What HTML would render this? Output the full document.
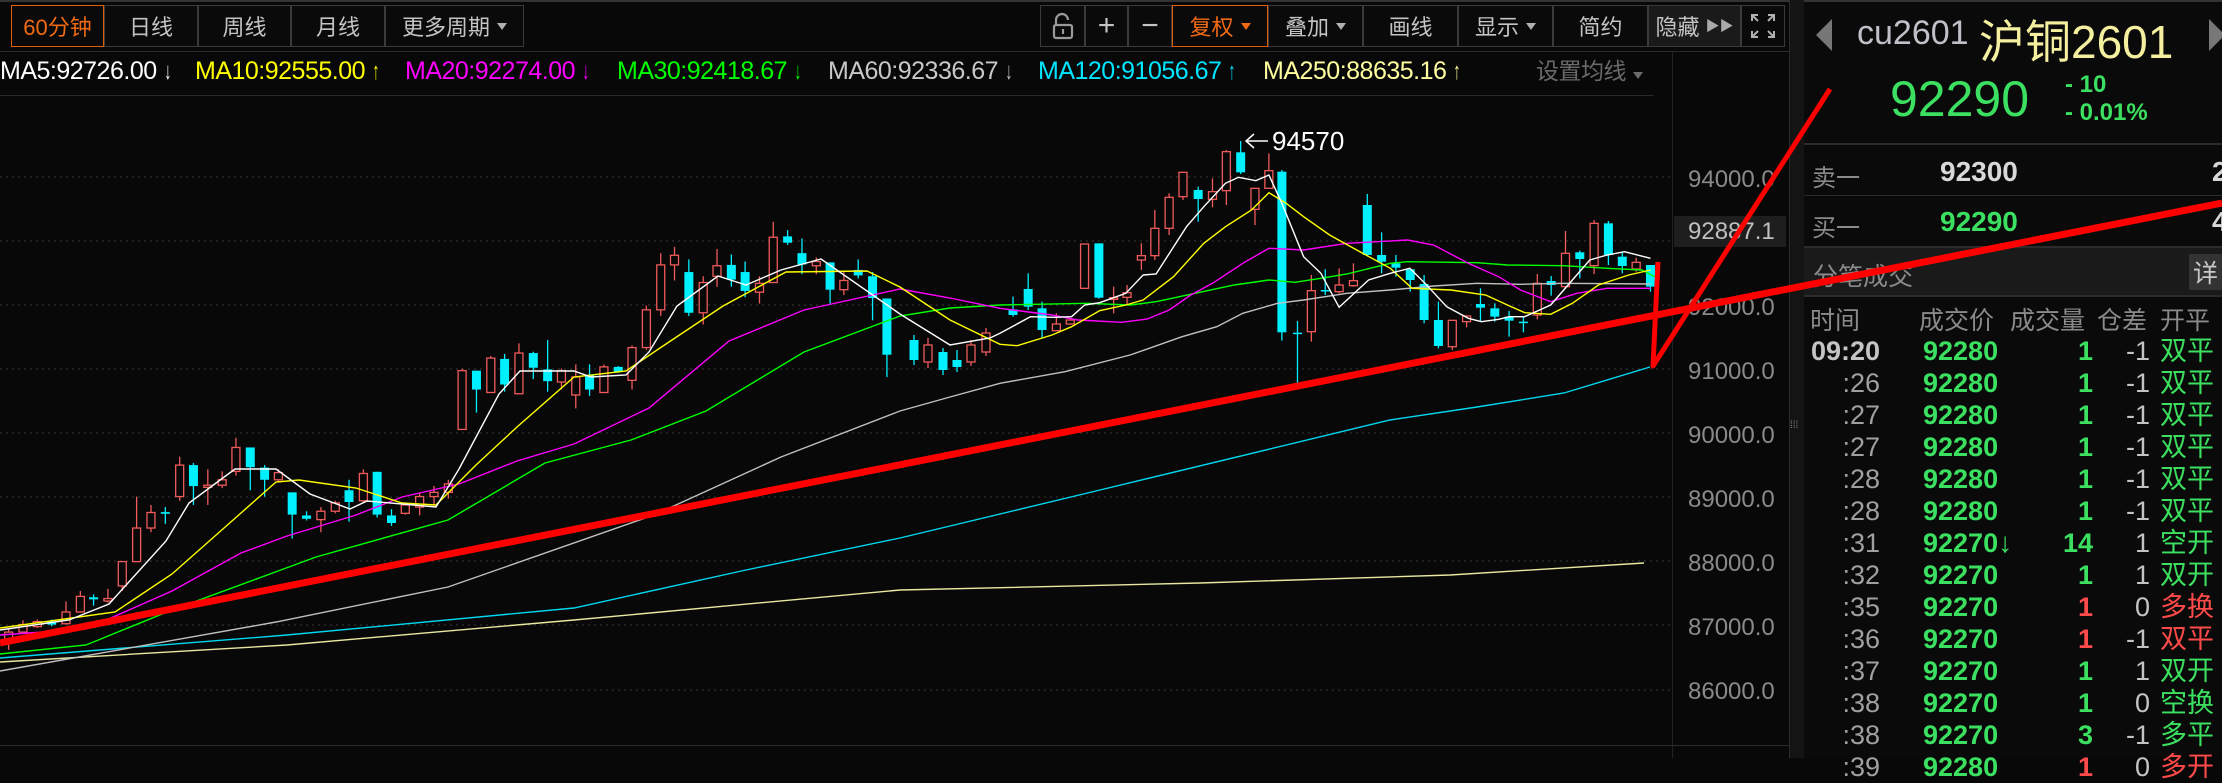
<!DOCTYPE html>
<html><head><meta charset="utf-8">
<style>
*{margin:0;padding:0;box-sizing:border-box}
body{width:2222px;height:758px;background:#080808;overflow:hidden;position:relative;font-family:"Liberation Sans","Noto Sans CJK SC",sans-serif;color:#c8c8c8}
.a{position:absolute;white-space:nowrap}
.btn{position:absolute;top:5px;height:42px;border:1px solid #3a3a3a;background:#0a0a0a;color:#c4c4c4;font-size:22px;display:flex;align-items:center;justify-content:center}
.tri{display:inline-block;width:0;height:0;border-left:5px solid transparent;border-right:5px solid transparent;border-top:7px solid #b0b0b0;margin-left:7px}
.ma{position:absolute;top:56px;font-size:25px;line-height:30px;letter-spacing:-0.5px}
.ar{font-size:24px;margin-left:5px;font-weight:100;transform:scaleX(0.6);display:inline-block}
.tb{position:absolute;font-size:27px;line-height:32px;font-weight:bold}
.g{color:#3ce060}.r{color:#ff4a4a}.w{color:#c4c4c4}
</style></head><body>
<div class="a" style="left:0;top:0;width:2222px;height:2px;background:#333"></div>
<div class="btn" style="left:11px;width:93px;border-color:#e0600a;color:#f06a14">60分钟</div>
<div class="btn" style="left:104px;width:94px">日线</div>
<div class="btn" style="left:198px;width:93px">周线</div>
<div class="btn" style="left:291px;width:94px">月线</div>
<div class="btn" style="left:385px;width:139px">更多周期<span class="tri"></span></div>
<div class="btn" style="left:1040px;width:45px"><svg width="22" height="28" viewBox="0 0 22 28"><path d="M4 13 V8 a6 6 0 0 1 12 0" fill="none" stroke="#9a9a9a" stroke-width="2.2"/><rect x="2" y="13" width="18" height="13" rx="2" fill="none" stroke="#9a9a9a" stroke-width="2.2"/><line x1="11" y1="17" x2="11" y2="22" stroke="#9a9a9a" stroke-width="2.2"/></svg></div>
<div class="btn" style="left:1085px;width:43px;font-size:30px">+</div>
<div class="btn" style="left:1128px;width:44px;font-size:30px">−</div>
<div class="btn" style="left:1172px;width:96px;border-color:#e0600a;color:#f06a14">复权<span class="tri" style="border-top-color:#f06a14"></span></div>
<div class="btn" style="left:1268px;width:95px">叠加<span class="tri"></span></div>
<div class="btn" style="left:1363px;width:95px">画线</div>
<div class="btn" style="left:1458px;width:95px">显示<span class="tri"></span></div>
<div class="btn" style="left:1553px;width:95px">简约</div>
<div class="btn" style="left:1648px;width:93px;background:#1a1a1a">隐藏<span style="font-size:14px;margin-left:6px;color:#aaa">▶▶</span></div>
<div class="btn" style="left:1741px;width:44px"><svg width="26" height="26" viewBox="0 0 26 26" fill="none" stroke="#b0b0b0" stroke-width="2"><path d="M2 8V2h6M2 2l6 6M24 8V2h-6M24 2l-6 6M2 18v6h6M2 24l6-6M24 18v6h-6M24 24l-6-6"/></svg></div>
<div class="a" style="left:0;top:51px;width:1790px;height:1px;background:#2a2a2a"></div>
<div class="ma" style="left:0;color:#ffffff">MA5:92726.00<span class="ar">↓</span></div>
<div class="ma" style="left:195px;color:#ffff00">MA10:92555.00<span class="ar">↑</span></div>
<div class="ma" style="left:405px;color:#ff00ff">MA20:92274.00<span class="ar">↓</span></div>
<div class="ma" style="left:617px;color:#00ff00">MA30:92418.67<span class="ar">↓</span></div>
<div class="ma" style="left:828px;color:#c8c8c8">MA60:92336.67<span class="ar">↓</span></div>
<div class="ma" style="left:1038px;color:#00e5ff">MA120:91056.67<span class="ar">↑</span></div>
<div class="ma" style="left:1263px;color:#ffffa0">MA250:88635.16<span class="ar">↑</span></div>
<div class="ma" style="left:1536px;color:#6a6a6a;font-size:23px">设置均线<span class="tri" style="border-top-color:#6a6a6a"></span></div>
<div class="a" style="left:0;top:95px;width:1653px;height:1px;background:#2a2a2a"></div>
<div class="a" style="left:1672px;top:52px;width:1px;height:706px;background:#222"></div>
<div class="a" style="left:1789px;top:0;width:1px;height:758px;background:#2c2c2c"></div>
<div class="a" style="left:1790px;top:0;width:14px;height:758px;background:#141414"></div>
<div class="a" style="left:1790px;top:424px;color:#888;font-size:10px;line-height:4px">⁞⁞⁞</div>
<div class="a" style="left:0;top:745px;width:1790px;height:1px;background:#2a2a2a"></div>
<div class="a" style="left:1688px;top:166px;font-size:24px;color:#8a8a8a">94000.0</div>
<div class="a" style="left:1688px;top:294px;font-size:24px;color:#8a8a8a">92000.0</div>
<div class="a" style="left:1674px;top:216px;width:112px;height:31px;background:#1e1e1e"></div>
<div class="a" style="left:1688px;top:218px;font-size:24px;color:#c0c0c0">92887.1</div>
<div class="a" style="left:1688px;top:358px;font-size:24px;color:#8a8a8a">91000.0</div>
<div class="a" style="left:1688px;top:422px;font-size:24px;color:#8a8a8a">90000.0</div>
<div class="a" style="left:1688px;top:486px;font-size:24px;color:#8a8a8a">89000.0</div>
<div class="a" style="left:1688px;top:550px;font-size:24px;color:#8a8a8a">88000.0</div>
<div class="a" style="left:1688px;top:614px;font-size:24px;color:#8a8a8a">87000.0</div>
<div class="a" style="left:1688px;top:678px;font-size:24px;color:#8a8a8a">86000.0</div>
<div class="a" style="left:1804px;top:0;width:418px;height:758px;background:#0a0a0a"></div>
<div class="a" style="left:1804px;top:0;width:418px;height:2px;background:#333"></div>
<svg class="a" style="left:1816px;top:19px" width="18" height="32"><path d="M16 0L0 16L16 32Z" fill="#777"/></svg>
<svg class="a" style="left:2209px;top:19px" width="13" height="32"><path d="M0 0L16 16L0 32Z" fill="#777"/></svg>
<div class="a" style="left:1857px;top:14px;font-size:34px;color:#c0c0c8">cu2601</div>
<div class="a" style="left:1979px;top:6px;font-size:46px;color:#f5f0a0">沪铜2601</div>
<div class="a" style="left:1890px;top:70px;font-size:50px;color:#3ce060">92290</div>
<div class="a" style="left:2065px;top:71px;font-size:24px;font-weight:bold;color:#3ce060">- 10</div>
<div class="a" style="left:2065px;top:99px;font-size:24px;font-weight:bold;color:#3ce060">- 0.01%</div>
<div class="a" style="left:1804px;top:143px;width:418px;height:2px;background:#2c2c2c"></div>
<div class="a" style="left:1812px;top:158px;font-size:24px;color:#8a8a8a">卖一</div>
<div class="a" style="left:1940px;top:156px;font-size:28px;font-weight:bold;color:#d8d8d8">92300</div>
<div class="a" style="left:2212px;top:156px;font-size:28px;font-weight:bold;color:#d8d8d8">2</div>
<div class="a" style="left:1804px;top:195px;width:418px;height:1px;background:#2c2c2c"></div>
<div class="a" style="left:1812px;top:208px;font-size:24px;color:#8a8a8a">买一</div>
<div class="a" style="left:1940px;top:206px;font-size:28px;font-weight:bold;color:#3ce060">92290</div>
<div class="a" style="left:2212px;top:206px;font-size:28px;font-weight:bold;color:#d8d8d8">4</div>
<div class="a" style="left:1804px;top:246px;width:418px;height:51px;background:#1a1a1a;border-top:2px solid #2c2c2c;border-bottom:2px solid #2c2c2c"></div>
<div class="a" style="left:1813px;top:257px;font-size:25px;color:#8a8a8a">分笔成交</div>
<div class="a" style="left:2189px;top:254px;width:33px;height:36px;background:#333;font-size:25px;color:#c8c8c8;padding-left:4px">详</div>
<div class="a" style="left:1810px;top:301px;font-size:25px;color:#8a8a8a">时间</div>
<div class="a" style="left:1919px;top:301px;font-size:25px;color:#8a8a8a">成交价</div>
<div class="a" style="left:2010px;top:301px;font-size:25px;color:#8a8a8a">成交量</div>
<div class="a" style="left:2097px;top:301px;font-size:25px;color:#8a8a8a">仓差</div>
<div class="a" style="left:2160px;top:301px;font-size:25px;color:#8a8a8a">开平</div>
<div id="tbl"></div>
<svg id="ch" class="a" style="left:0;top:0" width="2222" height="758"></svg>
<script>
var rows=[["09:20","92280","1","-1","双平",0,0],[":26","92280","1","-1","双平",0,0],[":27","92280","1","-1","双平",0,0],[":27","92280","1","-1","双平",0,0],[":28","92280","1","-1","双平",0,0],[":28","92280","1","-1","双平",0,0],[":31","92270","14","1","空开",0,0,1],[":32","92270","1","1","双开",0,0],[":35","92270","1","0","多换",1,1],[":36","92270","1","-1","双平",1,1],[":37","92270","1","1","双开",0,0],[":38","92270","1","0","空换",0,0],[":38","92270","3","-1","多平",0,0],[":39","92280","1","0","多开",1,1]];
var h="";
rows.forEach(function(r,i){var y=335+32*i;
h+='<div class="tb w" style="right:342px;top:'+y+'px;'+(i?'font-weight:normal;color:#a0a0a0':'')+'">'+r[0]+'</div>';
h+='<div class="tb g" style="left:1923px;top:'+y+'px">'+r[1]+(r[7]?'<span style="font-size:28px;font-weight:normal">↓</span>':'')+'</div>';
h+='<div class="tb '+(r[5]?'r':'g')+'" style="right:129px;top:'+y+'px">'+r[2]+'</div>';
h+='<div class="tb w" style="right:72px;top:'+y+'px;font-weight:normal">'+r[3]+'</div>';
h+='<div class="tb '+(r[6]?'r':'g')+'" style="left:2160px;top:'+y+'px;font-weight:normal">'+r[4]+'</div>';});
document.getElementById('tbl').innerHTML=h;
var s="";
[177,241,305,369,433,497,561,625,690].forEach(function(y){s+='<line x1="0" y1="'+y+'" x2="1672" y2="'+y+'" stroke="#3a3a3a" stroke-dasharray="2,4"/>';});
function z6(a){return a.map(function(p){return [1000+p[0]/2.306,120+p[1]/3]})}
var c5=[[15,1268,1285,1260,1310,1],[40,1250,1268,1240,1272,1],[65,1243,1255,1238,1258,1],[90,1243,1250,1238,1254,0],[115,1220,1248,1195,1250,1],[140,1183,1220,1170,1222,1],[163,1185,1190,1178,1205,0],[188,1188,1194,1165,1198,1],[213,1100,1158,1100,1170,1],[238,1020,1100,945,1100,1],[263,983,1020,965,1030,1],[288,982,986,970,1010,0],[313,870,945,850,955,1],[337,870,920,865,965,0],[362,918,923,880,965,1],[387,905,918,885,925,1],[411,828,885,805,895,1],[436,828,875,828,930,0],[461,876,905,870,945,0],[485,888,905,880,910,1],[509,935,988,935,1045,0],[534,990,998,980,1002,0],[559,980,1000,970,1030,1],[584,960,980,955,985,1],[608,930,958,905,1005,0],[633,890,955,880,960,1],[657,886,988,886,995,0],[682,990,1008,975,1015,0],[706,965,985,960,988,1],[731,945,970,935,990,1],[756,935,945,920,970,1],[781,915,935,905,950,1],[805,645,785,640,785,1],[830,645,690,645,745,0],[855,615,697,610,697,1],[879,617,678,605,695,0],[904,603,700,580,700,1],[929,603,638,600,665,0],[954,642,670,572,695,0],[978,645,672,640,690,1],[1003,660,703,630,735,1],[1027,655,690,630,705,0],[1052,636,697,630,697,1],[1077,636,648,634,650,0],[1101,590,668,585,690,1],[1126,500,590,490,595,1],[1151,393,500,365,515,1],[1175,370,393,350,430,1],[1200,410,507,380,515,0],[1225,435,507,420,535,1],[1249,395,420,355,445,1],[1274,393,428,368,445,0],[1298,410,455,385,470,0],[1323,437,458,420,485,1],[1347,327,435,290,435,1],[1372,325,340,310,345,0],[1397,365,392,330,415,0],[1422,385,395,375,415,1],[1446,387,452,387,485,0],[1470,430,452,410,465,1],[1495,405,418,380,425,0],[1520,420,472,410,525,0],[1545,473,607,473,660,0]];
var C=[];
c5.forEach(function(c){C.push([c[0]/1.742,100+c[1]/2.383,100+c[2]/2.383,100+c[3]/2.383,100+c[4]/2.383,c[5]])});
[[914,340,360,335,365,0],[928,345,362,338,368,1],[943,352,370,348,375,0],[957,360,367,350,372,0],[971,345,362,340,366,1],[986,333,352,328,356,1]].forEach(function(c){C.push(c)});
var c6=[[30,568,585,530,590,0],[65,507,560,460,570,0],[97,565,630,545,655,0],[130,612,632,580,632,1],[162,600,612,598,614,1],[195,372,505,372,505,1],[228,370,533,370,536,0],[262,533,538,500,580,1],[293,518,532,495,555,1],[326,407,420,370,450,1],[357,325,407,270,420,1],[390,232,325,220,345,1],[422,157,230,155,240,1],[457,210,237,200,305,0],[490,215,238,175,262,1],[522,95,212,90,255,1],[555,97,157,63,162,0],[588,205,268,205,315,1],[620,152,205,100,205,1],[650,155,637,150,662,0],[686,638,641,603,790,0],[718,512,635,465,665,1],[750,510,513,448,525,0],[782,495,515,445,520,1],[815,482,497,430,500,1],[847,255,405,222,408,0],[880,405,425,337,460,0],[913,430,443,405,470,0],[946,448,480,448,515,0],[978,492,600,465,610,0],[1011,600,678,545,685,0],[1043,601,680,601,690,1],[1076,588,605,588,622,1],[1108,552,563,505,605,0],[1141,565,590,550,605,0],[1174,590,602,573,650,0],[1207,605,607,590,637,0],[1239,490,585,462,598,1],[1271,483,495,468,527,0],[1304,400,500,333,505,1],[1337,397,417,392,475,0],[1370,310,437,300,462,1],[1403,310,405,303,435,0],[1435,410,438,395,460,0],[1467,427,447,413,455,1],[1500,435,500,435,515,0]];
c6.forEach(function(c){C.push([1000+c[0]/2.306,120+c[1]/3,120+c[2]/3,120+c[3]/3,120+c[4]/3,c[5]])});
C.forEach(function(c){var x=c[0],col=c[5]?'#f05a5a':'#00f0ff',b=Math.max(c[2]-c[1],1.5);
s+='<line x1="'+x+'" y1="'+c[3]+'" x2="'+x+'" y2="'+c[4]+'" stroke="'+col+'" stroke-width="1.3"/>';
if(c[5])s+='<rect x="'+(x-4)+'" y="'+c[1]+'" width="8" height="'+b+'" fill="#080808" stroke="'+col+'" stroke-width="1.3"/>';
else s+='<rect x="'+(x-4.5)+'" y="'+c[1]+'" width="9" height="'+b+'" fill="'+col+'"/>';});
function pl(p,col,w){return '<polyline fill="none" stroke="'+col+'" stroke-width="'+(w||1.4)+'" points="'+p.map(function(q){return q[0].toFixed(1)+','+q[1].toFixed(1)}).join(' ')+'"/>'}
var white=[[0,630],[69,620],[109,604],[166,541],[189,503],[235,469],[276,469],[310,494],[350,509],[367,501],[436,507],[459,469],[499,394],[520,371],[574,371],[591,377],[626,375],[649,352],[677,306],[718,276],[746,285],[781,270],[821,259],[900,314],[950,345],[990,338]].concat(z6([[0,640],[70,590],[125,592],[165,590],[195,555],[230,548],[290,520],[330,465],[360,462],[430,320],[470,260],[520,190],[550,172],[590,182],[620,165],[650,250],[700,410],[740,460],[782,562],[850,480],[900,460],[945,445],[980,490],[1030,560],[1080,595],[1110,605],[1150,598],[1175,590],[1210,590],[1270,555],[1320,480],[1360,420],[1400,405],[1440,395],[1500,415]]));
var yel=[[0,628],[115,612],[172,574],[241,513],[276,482],[299,480],[356,488],[402,503],[436,505],[476,465],[517,427],[574,377],[626,371],[660,348],[723,306],[786,272],[867,271],[900,287],[950,320]].concat(z6([[0,673],[40,677],[120,645],[165,620],[230,572],[290,555],[330,540],[400,470],[470,370],[520,320],[580,270],[620,218],[660,250],[700,290],[760,345],[830,395],[900,445],[950,505],[1040,510],[1120,525],[1170,555],[1210,578],[1270,583],[1320,550],[1380,495],[1450,465],[1500,450]]));
var mag=[[0,635],[86,629],[172,591],[241,553],[287,536],[356,515],[402,497],[459,484],[517,461],[574,444],[649,408],[729,341],[804,310],[900,289],[950,298]].concat(z6([[0,565],[120,585],[180,600],[280,607],[340,597],[390,570],[440,525],[490,490],[560,430],[620,385],[700,390],[800,370],[940,360],[1000,375],[1080,430],[1150,470],[1200,510],[1270,545],[1330,520],[1400,505],[1500,505]]));
var grn=[[0,654],[86,645],[172,610],[316,557],[448,520],[545,463],[631,440],[706,411],[804,352],[900,316],[950,308]].concat(z6([[0,555],[200,550],[300,555],[360,545],[450,520],[540,495],[620,480],[680,487],[740,475],[800,462],[900,430],[940,425],[1100,428],[1170,435],[1300,437],[1400,445],[1480,450],[1510,470]]));
var gry=[[0,671],[276,622],[448,587],[654,515],[781,457],[900,411],[950,397]].concat(z6([[0,790],[150,755],[300,705],[420,650],[500,620],[560,580],[640,550],[700,540],[800,520],[900,510],[1000,498],[1100,490],[1200,493],[1300,490],[1500,492]]));
var cyn=[[0,658],[287,635],[574,608],[746,570],[900,538],[1100,490],[1390,420],[1477,407],[1564,393],[1650,367]];
var m250=[[0,662],[287,645],[574,620],[900,590],[1200,583],[1450,575],[1644,563]];
s+=pl(m250,'#e8e8a0')+pl(cyn,'#00d8f0')+pl(gry,'#c0c0c0')+pl(grn,'#00ff00')+pl(mag,'#ff00ff')+pl(yel,'#ffff00')+pl(white,'#ffffff');
s+='<text x="1272" y="150" fill="#ffffff" font-size="26" font-family="Liberation Sans">94570</text><path d="M1268 141H1246M1254 134L1246 141L1254 148" stroke="#fff" fill="none" stroke-width="1.5"/>';
s+='<line x1="0" y1="643" x2="2222" y2="203" stroke="#ff0000" stroke-width="7"/>';
s+='<polyline points="1830,89 1653,366 1658,262" fill="none" stroke="#ff0000" stroke-width="5" stroke-linejoin="round"/>';
document.getElementById('ch').innerHTML=s;
</script>
</body></html>
